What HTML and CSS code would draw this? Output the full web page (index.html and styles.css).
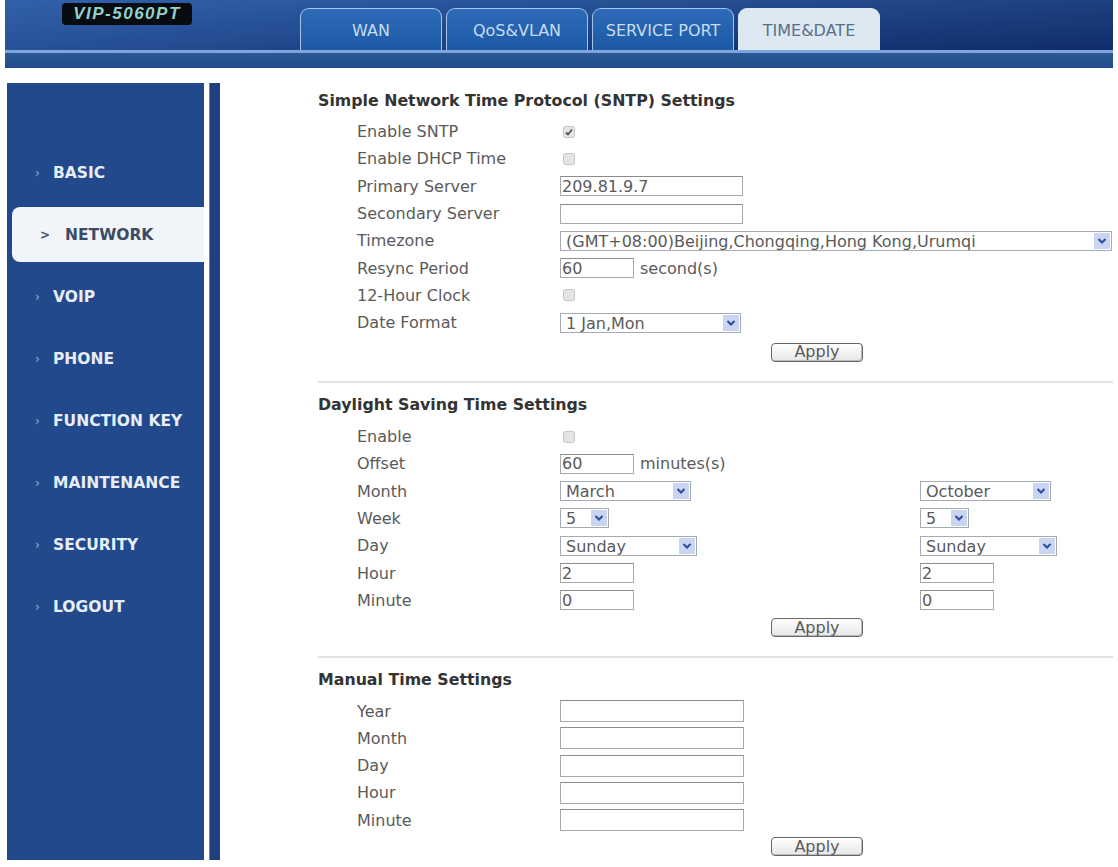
FILE: index.html
```html
<!DOCTYPE html>
<html lang="en">

<head>
    <meta charset="UTF-8">
    <meta name="viewport" content="width=device-width, initial-scale=1.0">
    <title>VIP-5060PT - Time &amp; Date</title>
    <link rel="stylesheet" href="styles.css">
</head>

<body>

    <header class="topbar">
        <div class="topbar-main">
            <div class="logo-wrap">
                <span class="logo">VIP-5060PT</span>
            </div>
            <nav class="tabs">
                <a href="#" class="tab">WAN</a>
                <a href="#" class="tab">QoS&amp;VLAN</a>
                <a href="#" class="tab">SERVICE PORT</a>
                <a href="#" class="tab active">TIME&amp;DATE</a>
            </nav>
        </div>
        <div class="topbar-strip"></div>
    </header>

    <div class="main">
        <!-- Left menu -->
        <aside class="sidebar">
            <ul class="menu">
                <li><a href="#"><span class="arrow">›</span>BASIC</a></li>
                <li class="active"><a href="#"><span class="arrow">&gt;</span>NETWORK</a></li>
                <li><a href="#"><span class="arrow">›</span>VOIP</a></li>
                <li><a href="#"><span class="arrow">›</span>PHONE</a></li>
                <li><a href="#"><span class="arrow">›</span>FUNCTION KEY</a></li>
                <li><a href="#"><span class="arrow">›</span>MAINTENANCE</a></li>
                <li><a href="#"><span class="arrow">›</span>SECURITY</a></li>
                <li><a href="#"><span class="arrow">›</span>LOGOUT</a></li>
            </ul>
        </aside>
        <div class="sidebar-edge"></div>

        <div class="content">

            <!-- SNTP -->
            <section class="block block-sntp">
                <h2>Simple Network Time Protocol (SNTP) Settings</h2>
                <div class="row">
                    <label>Enable SNTP</label>
                    <div class="ctl"><span class="check on"><svg width="12" height="12" viewBox="0 0 12 12"><rect x="0.5" y="0.5" width="11" height="11" rx="2" fill="#e4e4e4" stroke="#c4c4c4"/><path d="M3 6.5 L5 8.5 L9 3.5" fill="none" stroke="#555" stroke-width="1.8"/></svg></span></div>
                </div>
                <div class="row">
                    <label>Enable DHCP Time</label>
                    <div class="ctl"><span class="check"><svg width="12" height="12" viewBox="0 0 12 12"><rect x="0.5" y="0.5" width="11" height="11" rx="2" fill="#e4e4e4" stroke="#c4c4c4"/></svg></span></div>
                </div>
                <div class="row">
                    <label>Primary Server</label>
                    <div class="ctl"><input type="text" class="txt w-long" value="209.81.9.7"></div>
                </div>
                <div class="row">
                    <label>Secondary Server</label>
                    <div class="ctl"><input type="text" class="txt w-long" value=""></div>
                </div>
                <div class="row">
                    <label>Timezone</label>
                    <div class="ctl wide">
                        <div class="sel w-full">
                            <select><option>(GMT+08:00)Beijing,Chongqing,Hong Kong,Urumqi</option></select>
                            <span class="sel-btn"><svg width="10" height="8" viewBox="0 0 10 8"><path d="M1.5 2 L5 5.5 L8.5 2" fill="none" stroke="#2b4c9c" stroke-width="2"/></svg></span>
                        </div>
                    </div>
                </div>
                <div class="row">
                    <label>Resync Period</label>
                    <div class="ctl"><input type="text" class="txt w-short" value="60"><span class="unit">second(s)</span></div>
                </div>
                <div class="row">
                    <label>12-Hour Clock</label>
                    <div class="ctl"><span class="check"><svg width="12" height="12" viewBox="0 0 12 12"><rect x="0.5" y="0.5" width="11" height="11" rx="2" fill="#e4e4e4" stroke="#c4c4c4"/></svg></span></div>
                </div>
                <div class="row">
                    <label>Date Format</label>
                    <div class="ctl">
                        <div class="sel w-date">
                            <select><option>1 Jan,Mon</option></select>
                            <span class="sel-btn"><svg width="10" height="8" viewBox="0 0 10 8"><path d="M1.5 2 L5 5.5 L8.5 2" fill="none" stroke="#2b4c9c" stroke-width="2"/></svg></span>
                        </div>
                    </div>
                </div>
                <div class="actions"><button>Apply</button></div>
            </section>

            <!-- Daylight saving -->
            <section class="block block-dst">
                <h2>Daylight Saving Time Settings</h2>
                <div class="row">
                    <label>Enable</label>
                    <div class="ctl"><span class="check"><svg width="12" height="12" viewBox="0 0 12 12"><rect x="0.5" y="0.5" width="11" height="11" rx="2" fill="#e4e4e4" stroke="#c4c4c4"/></svg></span></div>
                </div>
                <div class="row">
                    <label>Offset</label>
                    <div class="ctl"><input type="text" class="txt w-short" value="60"><span class="unit">minutes(s)</span></div>
                </div>
                <div class="row">
                    <label>Month</label>
                    <div class="ctl">
                        <div class="sel w-month">
                            <select><option>March</option></select>
                            <span class="sel-btn"><svg width="10" height="8" viewBox="0 0 10 8"><path d="M1.5 2 L5 5.5 L8.5 2" fill="none" stroke="#2b4c9c" stroke-width="2"/></svg></span>
                        </div>
                    </div>
                    <div class="ctl">
                        <div class="sel w-month">
                            <select><option>October</option></select>
                            <span class="sel-btn"><svg width="10" height="8" viewBox="0 0 10 8"><path d="M1.5 2 L5 5.5 L8.5 2" fill="none" stroke="#2b4c9c" stroke-width="2"/></svg></span>
                        </div>
                    </div>
                </div>
                <div class="row">
                    <label>Week</label>
                    <div class="ctl">
                        <div class="sel w-week">
                            <select><option>5</option></select>
                            <span class="sel-btn"><svg width="10" height="8" viewBox="0 0 10 8"><path d="M1.5 2 L5 5.5 L8.5 2" fill="none" stroke="#2b4c9c" stroke-width="2"/></svg></span>
                        </div>
                    </div>
                    <div class="ctl">
                        <div class="sel w-week">
                            <select><option>5</option></select>
                            <span class="sel-btn"><svg width="10" height="8" viewBox="0 0 10 8"><path d="M1.5 2 L5 5.5 L8.5 2" fill="none" stroke="#2b4c9c" stroke-width="2"/></svg></span>
                        </div>
                    </div>
                </div>
                <div class="row">
                    <label>Day</label>
                    <div class="ctl">
                        <div class="sel w-day">
                            <select><option>Sunday</option></select>
                            <span class="sel-btn"><svg width="10" height="8" viewBox="0 0 10 8"><path d="M1.5 2 L5 5.5 L8.5 2" fill="none" stroke="#2b4c9c" stroke-width="2"/></svg></span>
                        </div>
                    </div>
                    <div class="ctl">
                        <div class="sel w-day">
                            <select><option>Sunday</option></select>
                            <span class="sel-btn"><svg width="10" height="8" viewBox="0 0 10 8"><path d="M1.5 2 L5 5.5 L8.5 2" fill="none" stroke="#2b4c9c" stroke-width="2"/></svg></span>
                        </div>
                    </div>
                </div>
                <div class="row">
                    <label>Hour</label>
                    <div class="ctl"><input type="text" class="txt w-short" value="2"></div>
                    <div class="ctl"><input type="text" class="txt w-short" value="2"></div>
                </div>
                <div class="row">
                    <label>Minute</label>
                    <div class="ctl"><input type="text" class="txt w-short" value="0"></div>
                    <div class="ctl"><input type="text" class="txt w-short" value="0"></div>
                </div>
                <div class="actions"><button>Apply</button></div>
            </section>

            <!-- Manual time -->
            <section class="block block-manual">
                <h2>Manual Time Settings</h2>
                <div class="row">
                    <label>Year</label>
                    <div class="ctl"><input type="text" class="txt w-manual tall" value=""></div>
                </div>
                <div class="row">
                    <label>Month</label>
                    <div class="ctl"><input type="text" class="txt w-manual tall" value=""></div>
                </div>
                <div class="row">
                    <label>Day</label>
                    <div class="ctl"><input type="text" class="txt w-manual tall" value=""></div>
                </div>
                <div class="row">
                    <label>Hour</label>
                    <div class="ctl"><input type="text" class="txt w-manual tall" value=""></div>
                </div>
                <div class="row">
                    <label>Minute</label>
                    <div class="ctl"><input type="text" class="txt w-manual tall" value=""></div>
                </div>
                <div class="actions"><button>Apply</button></div>
            </section>

        </div>
    </div>

</body>

</html>
```

FILE: styles.css
```css
body {
    margin: 0;
    padding: 0;
    background: #ffffff;
    font-family: 'DejaVu Sans', Verdana, sans-serif;
    font-size: 16px;
    color: #5a5a5a;
}

/* ---------- top bar ---------- */

.topbar {
    margin: 0 5px;
}

.topbar-main {
    height: 50px;
    display: flex;
    background: linear-gradient(90deg, rgba(50, 96, 168, 0.6), rgba(15, 40, 100, 0.3) 60%, rgba(10, 30, 85, 0.5)),
                linear-gradient(#3162aa, #173c80);
    border-bottom: 3px solid #7ea5dc;
}

.logo-wrap {
    width: 295px;
    padding-left: 57px;
    box-sizing: border-box;
    padding-top: 3px;
}

.logo {
    display: inline-block;
    width: 130px;
    height: 22px;
    line-height: 22px;
    text-align: center;
    background: #080c10;
    border-radius: 4px;
    color: #93d2cc;
    font-family: 'Liberation Sans', Arial, sans-serif;
    font-weight: bold;
    font-style: italic;
    font-size: 17px;
    letter-spacing: 1.5px;
}

.tabs {
    display: flex;
    align-items: flex-end;
    gap: 4px;
}

.tab {
    width: 142px;
    height: 42px;
    box-sizing: border-box;
    display: flex;
    align-items: center;
    justify-content: center;
    border: 1px solid #a6c3e8;
    border-bottom: none;
    border-radius: 9px 9px 0 0;
    background: linear-gradient(#2d6bb8, #1c5aa6);
    color: #c8dcf1;
    text-decoration: none;
    font-size: 16px;
    padding-top: 1px;
}

.tab.active {
    background: #dde8f2;
    border-color: #dde8f2;
    color: #5b6f88;
}

.topbar-strip {
    height: 15px;
    background: linear-gradient(#2c5896, #224c8a);
}

/* ---------- layout ---------- */

.main {
    display: flex;
    margin-top: 15px;
}

.sidebar {
    width: 197px;
    height: 777px;
    margin-left: 7px;
    background: #22498c;
    box-sizing: border-box;
    padding-top: 62px;
}

.sidebar-edge {
    width: 11px;
    height: 777px;
    margin-left: 5px;
    background: #213f7c;
    border-left: 1px solid #5f7fb5;
    box-sizing: border-box;
}

.menu {
    list-style: none;
    margin: 0;
    padding: 0;
    display: flex;
    flex-direction: column;
    gap: 7px;
}

.menu li a {
    height: 55px;
    display: flex;
    align-items: center;
    padding-left: 28px;
    color: #e7eef8;
    text-decoration: none;
    font-weight: bold;
    font-size: 15.5px;
}

.menu .arrow {
    width: 18px;
    color: #9bb2d6;
    font-size: 12px;
    font-weight: normal;
}

.menu li.active a {
    margin-left: 5px;
    padding-left: 28px;
    background: #f1f4f9;
    border-radius: 8px 0 0 8px;
    color: #3b4b66;
}

.menu li.active .arrow {
    width: 25px;
    color: #4a5670;
    font-size: 12px;
    font-weight: bold;
}

/* ---------- content ---------- */

.content {
    flex: 1;
    padding: 9px 5px 0 98px;
}

.block h2 {
    margin: 0;
    font-size: 15.8px;
    line-height: 18px;
    color: #333;
}

.block {
    border-bottom: 2px solid #e2e2e2;
}

.block-sntp h2 {
    margin-bottom: 8px;
}

.block-sntp .actions {
    margin-top: 6px;
    padding-bottom: 19px;
}

.block-dst {
    padding-top: 13px;
}

.block-dst h2 {
    margin-bottom: 9px;
}

.block-dst .actions {
    margin-top: 4px;
    padding-bottom: 19px;
}

.block-manual {
    padding-top: 13px;
    border-bottom: none;
}

.block-manual h2 {
    margin-bottom: 8px;
}

.block-manual .actions {
    margin-top: 3px;
}

.row {
    height: 27.3px;
    display: grid;
    grid-template-columns: 203px 360px auto;
    align-items: center;
    padding-left: 39px;
}

.row label {
    color: #5a5a5a;
}

.ctl {
    display: flex;
    align-items: center;
}

.ctl.wide {
    grid-column: 2 / 4;
}

.check {
    display: inline-flex;
    margin-left: 3px;
}

.txt {
    height: 20px;
    box-sizing: border-box;
    border: 1px solid #a9a9a9;
    border-top-color: #8c8c8c;
    padding: 0 1px;
    font-family: inherit;
    font-size: 16px;
    color: #5a5a5a;
    background: #fff;
}

.txt.tall {
    height: 22px;
}

.w-long { width: 183px; }
.w-short { width: 74px; }
.w-manual { width: 184px; }

.unit {
    margin-left: 6px;
    color: #5a5a5a;
}

.sel {
    height: 20px;
    box-sizing: border-box;
    display: inline-flex;
    border: 1px solid #a5abb3;
    background: #fff;
}

.sel select {
    flex: 1;
    min-width: 0;
    appearance: none;
    -webkit-appearance: none;
    border: none;
    background: transparent;
    padding: 0 5px;
    font-family: inherit;
    font-size: 16px;
    color: #5a5a5a;
    outline: none;
}

.sel-btn {
    width: 16px;
    margin: 1px;
    display: flex;
    align-items: center;
    justify-content: center;
    background: #c9d5f3;
}

.w-full { width: 552px; }
.w-date { width: 181px; }
.w-month { width: 131px; }
.w-week { width: 49px; }
.w-day { width: 137px; }

.actions {
    padding-left: 453px;
}

.actions button {
    width: 92px;
    height: 19px;
    padding: 0;
    border: 1px solid #666;
    border-radius: 4px;
    background: linear-gradient(#ffffff, #e6e6e6);
    box-shadow: inset -1px -1px 0 #bbb;
    font-family: inherit;
    font-size: 16px;
    line-height: 16px;
    color: #5a5a5a;
    cursor: pointer;
}
```
